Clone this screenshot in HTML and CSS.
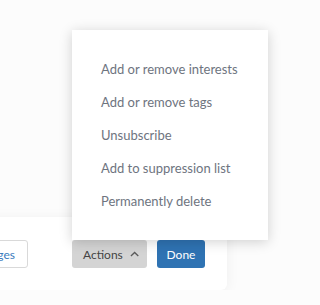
FILE: index.html
```html
<!DOCTYPE html>
<html lang="en">
<head>
    <meta charset="UTF-8">
    <meta name="viewport" content="width=device-width, initial-scale=1.0">
    <title>Contact actions</title>
    <link rel="stylesheet" href="styles.css">
</head>
<body>
    <div class="panel">
        <div class="panel-footer">
            <button class="btn btn-outline">Manage pages</button>
            <div class="footer-right">
                <div class="dropdown">
                    <ul class="dropdown-menu">
                        <li>Add or remove interests</li>
                        <li>Add or remove tags</li>
                        <li>Unsubscribe</li>
                        <li>Add to suppression list</li>
                        <li>Permanently delete</li>
                    </ul>
                    <button class="btn btn-gray">Actions
                        <svg class="chevron" width="10" height="6" viewBox="0 0 10 6"><path d="M1 5.2 L5 1.3 L9 5.2" fill="none" stroke="#5a5a5a" stroke-width="1.4"/></svg>
                    </button>
                </div>
                <button class="btn btn-primary">Done</button>
            </div>
        </div>
    </div>
</body>
</html>
```

FILE: styles.css
```css
body {
    margin: 0;
    padding: 0;
    background: #fcfcfc;
    font-family: 'Lato', 'Open Sans', sans-serif;
    color: #555;
    overflow: hidden;
}
.panel {
    margin: 217px 0 0 -100px;
    width: 327px;
    height: 73px;
    box-sizing: border-box;
    background: white;
    border-radius: 6px;
    box-shadow: 0 2px 14px rgba(0, 0, 0, 0.06);
    padding: 23px 22px 22px 0;
}
.panel-footer {
    display: flex;
    justify-content: space-between;
    align-items: center;
}
.footer-right {
    display: flex;
    gap: 10px;
}
.dropdown {
    position: relative;
}
.btn {
    height: 28px;
    border-radius: 3px;
    border: 0;
    font-family: inherit;
    font-size: 12px;
    padding: 0 12px;
    display: flex;
    align-items: center;
    gap: 7px;
}
.btn-outline {
    background: white;
    border: 1px solid #d9d9d9;
    color: #3a7bbd;
    width: 128px;
    justify-content: flex-end;
}
.btn-gray {
    background: #d4d4d4;
    color: #444;
    width: 75px;
    padding: 0 8px 0 11px;
}
.btn-primary {
    background: #2f73b3;
    color: white;
    width: 48px;
    justify-content: center;
}
.chevron {
    margin-top: -1px;
}
.dropdown-menu {
    position: absolute;
    left: 0;
    bottom: 28px;
    width: 196px;
    box-sizing: border-box;
    margin: 0;
    list-style: none;
    padding: 28px 0 28px 29px;
    background: white;
    box-shadow: 0 2px 12px rgba(0, 0, 0, 0.18);
    display: flex;
    flex-direction: column;
    gap: 11px;
}
.dropdown-menu li {
    line-height: 22px;
    font-size: 13px;
    color: #6e7480;
    white-space: nowrap;
}
```
